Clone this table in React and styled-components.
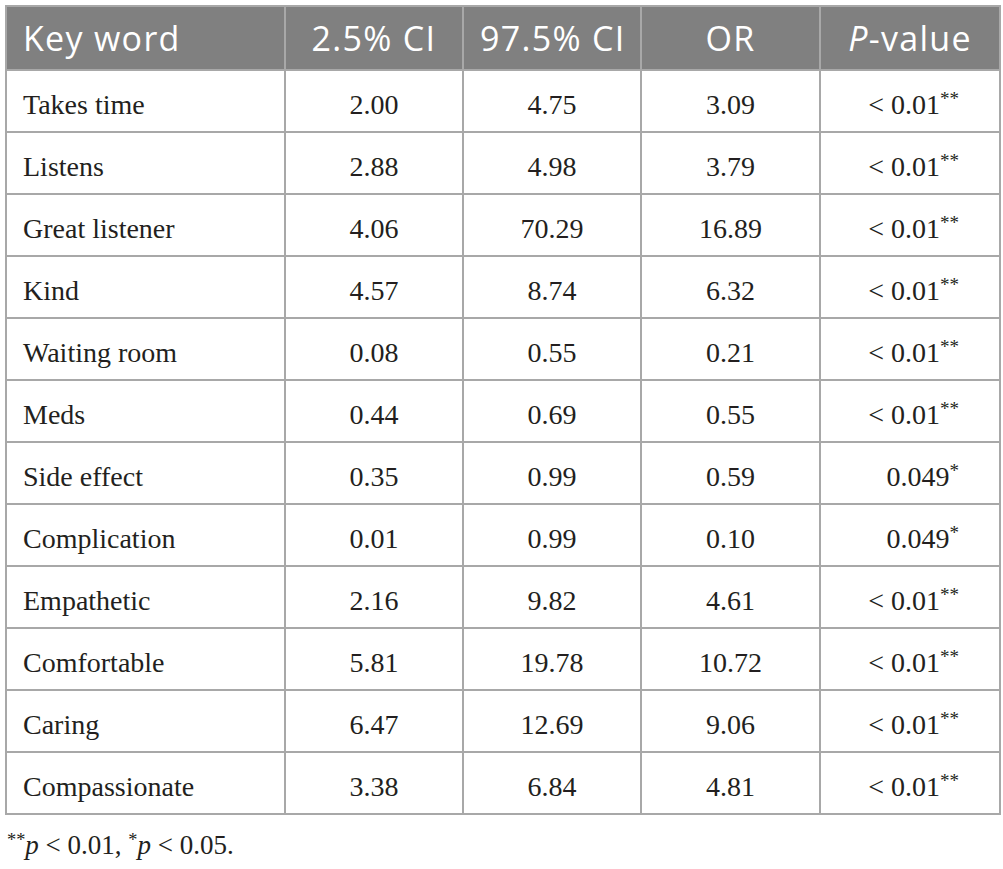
import React from "react";
import styled, { createGlobalStyle } from "styled-components";

const Global = createGlobalStyle`
  body {
    margin: 0;
    background: #ffffff;
  }
`;

const Page = styled.div`
  padding: 5px 4px 0 5px;
  width: 1003px;
  box-sizing: border-box;
`;

const Table = styled.table`
  border-collapse: collapse;
  width: 994px;
  table-layout: fixed;
`;

const HeadCell = styled.th`
  background: #808080;
  color: #ffffff;
  font-family: "Open Sans", "Liberation Sans", sans-serif;
  font-weight: 400;
  font-size: 34px;
  letter-spacing: 1.3px;
  height: 62px;
  padding: 0 16px;
  border: 2px solid #a8a8a8;
  text-align: ${(p) => p.$align || "center"};
  white-space: nowrap;
`;

const Cell = styled.td`
  font-family: "Liberation Serif", "Times New Roman", serif;
  font-size: 28px;
  color: #231f20;
  height: 52px;
  padding: 8px ${(p) => (p.$align === "right" ? "40px" : "16px")} 0;
  border: 2px solid #a8a8a8;
  text-align: ${(p) => p.$align || "center"};
  white-space: nowrap;
`;

const Stars = styled.sup`
  font-size: 0.68em;
  vertical-align: 0.45em;
  line-height: 0;
`;

const Note = styled.p`
  margin: 15px 0 0 2px;
  font-family: "Liberation Serif", "Times New Roman", serif;
  font-size: 27px;
  color: #231f20;
`;

const rows = [
  ["Takes time", "2.00", "4.75", "3.09", "< 0.01", "**"],
  ["Listens", "2.88", "4.98", "3.79", "< 0.01", "**"],
  ["Great listener", "4.06", "70.29", "16.89", "< 0.01", "**"],
  ["Kind", "4.57", "8.74", "6.32", "< 0.01", "**"],
  ["Waiting room", "0.08", "0.55", "0.21", "< 0.01", "**"],
  ["Meds", "0.44", "0.69", "0.55", "< 0.01", "**"],
  ["Side effect", "0.35", "0.99", "0.59", "0.049", "*"],
  ["Complication", "0.01", "0.99", "0.10", "0.049", "*"],
  ["Empathetic", "2.16", "9.82", "4.61", "< 0.01", "**"],
  ["Comfortable", "5.81", "19.78", "10.72", "< 0.01", "**"],
  ["Caring", "6.47", "12.69", "9.06", "< 0.01", "**"],
  ["Compassionate", "3.38", "6.84", "4.81", "< 0.01", "**"],
];

export default function App() {
  return (
    <Page>
      <Global />
      <Table>
        <colgroup>
          <col style={{ width: 279 }} />
          <col style={{ width: 178 }} />
          <col style={{ width: 178 }} />
          <col style={{ width: 179 }} />
          <col style={{ width: 180 }} />
        </colgroup>
        <thead>
          <tr>
            <HeadCell $align="left">Key word</HeadCell>
            <HeadCell>2.5% CI</HeadCell>
            <HeadCell>97.5% CI</HeadCell>
            <HeadCell>OR</HeadCell>
            <HeadCell>
              <i>P</i>-value
            </HeadCell>
          </tr>
        </thead>
        <tbody>
          {rows.map((r) => (
            <tr key={r[0]}>
              <Cell $align="left">{r[0]}</Cell>
              <Cell>{r[1]}</Cell>
              <Cell>{r[2]}</Cell>
              <Cell>{r[3]}</Cell>
              <Cell $align="right">
                {r[4]}
                <Stars>{r[5]}</Stars>
              </Cell>
            </tr>
          ))}
        </tbody>
      </Table>
      <Note>
        <Stars>**</Stars>
        <i>p</i> &lt; 0.01, <Stars>*</Stars>
        <i>p</i> &lt; 0.05.
      </Note>
    </Page>
  );
}
